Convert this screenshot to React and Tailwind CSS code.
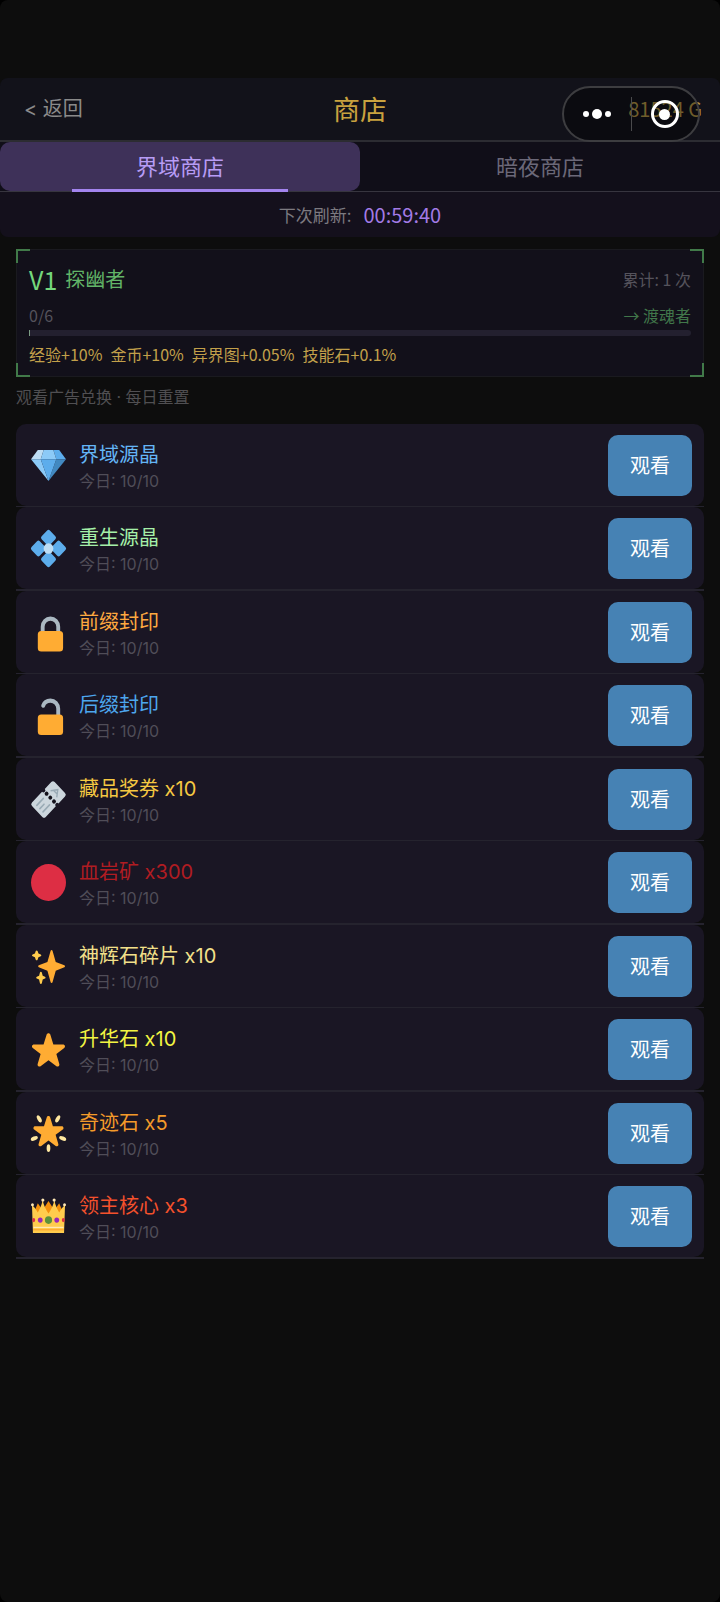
import React from 'react'

const ITEMS = [
  { name: '界域源晶', color: 'text-[#64b5f6]', icon: GemIcon },
  { name: '重生源晶', color: 'text-[#a5f0a8]', icon: FlowerIcon },
  { name: '前缀封印', color: 'text-[#ffa940]', icon: LockIcon },
  { name: '后缀封印', color: 'text-[#4da6ee]', icon: UnlockIcon },
  { name: '藏品奖券 x10', color: 'text-[#f5c842]', icon: TicketIcon },
  { name: '血岩矿 x300', color: 'text-[#b01c22]', icon: OreIcon },
  { name: '神辉石碎片 x10', color: 'text-[#f2e08a]', icon: SparklesIcon },
  { name: '升华石 x10', color: 'text-[#f2f542]', icon: StarIcon },
  { name: '奇迹石 x5', color: 'text-[#f39a2a]', icon: GlowStarIcon },
  { name: '领主核心 x3', color: 'text-[#f4512c]', icon: CrownIcon },
]

const BONUSES = ['经验+10%', '金币+10%', '异界图+0.05%', '技能石+0.1%']

const STAR_PATH =
  'M27.287 34.627c-.404 0-.806-.124-1.152-.371L18 28.422l-8.135 5.834c-.343.247-.743.371-1.147.371-.405 0-.81-.126-1.157-.378-.683-.493-.963-1.374-.711-2.177l3.034-9.792-8.062-5.681c-.685-.507-.967-1.387-.715-2.19.259-.804 1.007-1.351 1.853-1.354l9.947-.015 3.208-9.552c.268-.803 1.025-1.343 1.871-1.343.847 0 1.597.541 1.864 1.343l3.139 9.553 10.019.014c.847.003 1.595.551 1.853 1.354.252.804-.03 1.684-.715 2.19l-8.064 5.681 3.034 9.792c.252.803-.026 1.684-.71 2.177-.347.252-.752.378-1.158.378z'

function Icon({ children }) {
  return (
    <svg
      viewBox="0 0 36 36"
      preserveAspectRatio="none"
      className="w-[35px] h-[37px] shrink-0 overflow-visible"
      aria-hidden="true"
    >
      {children}
    </svg>
  )
}

function GemIcon() {
  return (
    <Icon>
      <path fill="#BDDDF4" d="M13 3H7l-7 9h10z" />
      <path fill="#5DADEC" d="M36 12l-7-9h-6l3 9z" />
      <path fill="#4289C1" d="M26 12h10L18 33z" />
      <path fill="#8CCAF7" d="M10 12H0l18 21zm3-9l-3 9h16l-3-9z" />
      <path fill="#5DADEC" d="M18 33l-8-21h16z" />
    </Icon>
  )
}

function FlowerIcon() {
  return (
    <Icon>
      <g fill="#5DADEC">
        <rect x="1.6" y="1.6" width="12" height="12" rx="2" transform="translate(10.4 0) rotate(45 7.6 7.6)" />
        <rect x="1.6" y="1.6" width="12" height="12" rx="2" transform="translate(10.4 20.8) rotate(45 7.6 7.6)" />
        <rect x="1.6" y="1.6" width="12" height="12" rx="2" transform="translate(0 10.4) rotate(45 7.6 7.6)" />
        <rect x="1.6" y="1.6" width="12" height="12" rx="2" transform="translate(20.8 10.4) rotate(45 7.6 7.6)" />
      </g>
      <circle cx="18" cy="18" r="5" fill="#BDDDF4" />
    </Icon>
  )
}

function LockIcon() {
  return (
    <Icon>
      <path d="M12 20v-7.5a8 8 0 0 1 16 0V20" fill="none" stroke="#AAB8C2" strokeWidth="4" />
      <rect x="7" y="16.5" width="26" height="20" rx="3.5" fill="#FFAC33" />
    </Icon>
  )
}

function UnlockIcon() {
  return (
    <Icon>
      <path
        d="M12.500 8.500C13.500 5.500 16.500 3.500 20 3.500a8 8 0 0 1 8 8V20"
        fill="none"
        stroke="#AAB8C2"
        strokeWidth="4"
        strokeLinecap="round"
      />
      <rect x="7" y="17" width="26" height="20" rx="3.5" fill="#FFAC33" />
    </Icon>
  )
}

function TicketIcon() {
  return (
    <Icon>
      <g transform="rotate(-45 18 18)">
        <path
          d="M4 8h14.6a2 2 0 0 0 4 0H32a2.500 2.500 0 0 1 2.500 2.500v15A2.500 2.500 0 0 1 32 28h-9.400a2 2 0 0 0-4 0H4a2.500 2.500 0 0 1-2.500-2.500v-15A2.500 2.500 0 0 1 4 8z"
          fill="#CCD6DD"
        />
        <path d="M5.500 13.500h9.500M5.500 18h6M5.500 22.500h9.500" stroke="#99AAB5" strokeWidth="1.6" strokeLinecap="round" />
        <path d="M25.500 22.500l6-4.500-6-4.500M28 15.500v5" fill="none" stroke="#99AAB5" strokeWidth="1.4" />
        <circle cx="20.600" cy="12.600" r="2" fill="#14121c" />
        <circle cx="20.600" cy="18" r="2" fill="#14121c" />
        <circle cx="20.600" cy="23.400" r="2" fill="#14121c" />
      </g>
    </Icon>
  )
}

function OreIcon() {
  return (
    <Icon>
      <circle cx="18" cy="18" r="18" fill="#DD2E44" />
    </Icon>
  )
}

function SparklesIcon() {
  return (
    <Icon>
      <path
        fill="#FFAC33"
        d="M34.347 16.893l-8.899-3.294-3.323-10.891c-.128-.42-.517-.708-.956-.708-.439 0-.828.288-.956.708l-3.322 10.891-8.9 3.294c-.393.146-.653.519-.653.938 0 .418.26.793.653.938l8.895 3.293 3.324 11.223c.126.424.516.715.959.715.442 0 .833-.291.959-.716l3.324-11.223 8.896-3.293c.391-.144.652-.518.652-.937 0-.418-.261-.792-.653-.938z"
      />
      <path
        fill="#FFCC4D"
        d="M14.347 27.894l-2.314-.856-.9-3.3c-.118-.436-.513-.738-.964-.738-.451 0-.846.302-.965.737l-.9 3.3-2.313.856c-.393.145-.653.52-.653.938 0 .418.26.793.653.938l2.301.853.907 3.622c.112.444.511.756.97.756.459 0 .858-.312.97-.757l.907-3.622 2.301-.853c.393-.144.653-.519.653-.937 0-.418-.26-.793-.653-.937zM10.009 6.231l-2.364-.875-.876-2.365c-.145-.393-.519-.653-.938-.653-.418 0-.792.26-.938.653l-.875 2.365-2.365.875c-.393.146-.653.52-.653.938 0 .418.26.793.653.938l2.365.875.875 2.365c.146.393.52.653.938.653.418 0 .792-.26.938-.653l.875-2.365 2.365-.875c.393-.146.653-.52.653-.938 0-.418-.26-.792-.653-.938z"
      />
    </Icon>
  )
}

function StarIcon() {
  return (
    <Icon>
      <path fill="#FFAC33" d={STAR_PATH} />
    </Icon>
  )
}

function GlowStarIcon() {
  return (
    <Icon>
      <g fill="#FFE8A0">
        <ellipse cx="8.5" cy="3.8" rx="1.9" ry="3.8" transform="rotate(-32 8.5 3.8)" />
        <ellipse cx="27.5" cy="3.8" rx="1.9" ry="3.8" transform="rotate(32 27.5 3.8)" />
        <ellipse cx="3.4" cy="22.8" rx="1.9" ry="3.8" transform="rotate(68 3.4 22.8)" />
        <ellipse cx="32.6" cy="22.8" rx="1.9" ry="3.8" transform="rotate(-68 32.6 22.8)" />
        <ellipse cx="18" cy="32.2" rx="1.9" ry="3.8" />
      </g>
      <path fill="#FFAC33" d={STAR_PATH} transform="translate(1.6 -1) scale(.91)" />
    </Icon>
  )
}

function CrownIcon() {
  return (
    <Icon>
      <path fill="#F4900C" d="M4 12l3-7 5 7 6-9 6 9 5-7 3 7v12H4z" />
      <path
        fill="#FFCC4D"
        d="M1 7c3 2 4 4 6 7 2-3 4-7 5-12 1 5 3 9 6 13 3-4 5-8 6-13 1 5 3 9 5 12 2-3 3-5 6-7l-1 27H2z"
      />
      <path fill="#FFE8B6" d="M2.500 28h31v1.200h-31z" />
      <path fill="#FFAC33" d="M2.200 30.200h31.600v1.400H2.200z" />
      <g fill="#FFE8B6">
        <circle cx="1.5" cy="6.5" r="1.5" />
        <circle cx="12.2" cy="2" r="1.6" />
        <circle cx="23.8" cy="2" r="1.6" />
        <circle cx="34.5" cy="6.5" r="1.5" />
      </g>
      <circle cx="18" cy="21.5" r="3.7" fill="#5C913B" />
      <circle cx="9.5" cy="21.5" r="2.5" fill="#9B26B6" />
      <circle cx="26.5" cy="21.5" r="2.5" fill="#9B26B6" />
      <ellipse cx="2.8" cy="21.5" rx="1.5" ry="2" fill="#DD2E44" />
      <ellipse cx="33.2" cy="21.5" rx="1.5" ry="2" fill="#DD2E44" />
    </Icon>
  )
}

function Capsule() {
  return (
    <div className="absolute right-5 top-2 flex h-14 w-[138px] items-center rounded-full border-2 border-[#3d3d40] bg-black/35">
      <button type="button" aria-label="更多" className="flex flex-1 items-center justify-center gap-[3px]">
        <span className="size-1.5 rounded-full bg-white" />
        <span className="size-2.5 rounded-full bg-white" />
        <span className="size-1.5 rounded-full bg-white" />
      </button>
      <span className="h-[34px] w-px bg-[#4a4a4c]" />
      <button type="button" aria-label="关闭" className="flex flex-1 items-center justify-center">
        <span className="flex size-7 items-center justify-center rounded-full border-3 border-white">
          <span className="size-[11px] rounded-full bg-white" />
        </span>
      </button>
    </div>
  )
}

function Header() {
  return (
    <header className="relative grid h-16 grid-cols-3 items-center rounded-t-lg border-b-2 border-[#2c2c32] bg-[#12121a] px-[18px]">
      <button
        type="button"
        className="justify-self-start px-1.5 font-['Inter','Noto_Sans_CJK_SC',sans-serif] text-xl text-[#8a8a8a]"
      >
        &lt; 返回
      </button>
      <h1 className="justify-self-center text-[27px] leading-8 text-[#c9a23f]">商店</h1>
      <span className="justify-self-end text-xl text-[#ab8f42]">81524 G</span>
      <Capsule />
    </header>
  )
}

function Tabs() {
  return (
    <nav className="grid h-[50px] grid-cols-2 border-b border-[#37353f] bg-[#100e18] text-[22px]">
      <button type="button" className="relative rounded-[10px] bg-[#3e3159] pb-0.5 text-[#b79cf5]">
        界域商店
        <span className="absolute inset-x-[20%] -bottom-px h-[3px] bg-[#a384ee]" />
      </button>
      <button type="button" className="pb-0.5 text-[#6b6878]">
        暗夜商店
      </button>
    </nav>
  )
}

function VipCard() {
  return (
    <section className="relative mx-4 mt-3 border border-[#1a1a1f] bg-[#12101a] px-3 pt-[11px] pb-2.5 text-base">
      <span className="absolute -top-px -left-px size-3.5 border-t-2 border-l-2 border-[#417a49]" />
      <span className="absolute -top-px -right-px size-3.5 border-t-2 border-r-2 border-[#417a49]" />
      <span className="absolute -bottom-px -left-px size-3.5 border-b-2 border-l-2 border-[#417a49]" />
      <span className="absolute -right-px -bottom-px size-3.5 border-r-2 border-b-2 border-[#417a49]" />
      <div className="flex items-center justify-between">
        <h2 className="flex items-center gap-2 text-xl text-[#62b568]">
          <span className="text-[25px] leading-9 text-[#74d67c]">V1</span>
          探幽者
        </h2>
        <span className="text-[#55535c]">累计: 1 次</span>
      </div>
      <div className="mt-1.5 mb-[3px] flex items-center justify-between text-[#55535c]">
        <span>0/6</span>
        <span className="text-[#41774a]">→ 渡魂者</span>
      </div>
      <div className="h-1.5 rounded-r-full bg-[#23202f]">
        <div className="h-full w-px bg-[#7c9c84]" />
      </div>
      <div className="mt-1.5 flex gap-2 text-[#c2a04a]">
        {BONUSES.map((bonus) => (
          <span key={bonus}>{bonus}</span>
        ))}
      </div>
    </section>
  )
}

function ShopRow({ item }) {
  const ItemIcon = item.icon
  return (
    <li className="border-[#25232e] odd:border-b even:border-b-2">
      <div className="flex h-[82px] items-center rounded-[10px] bg-[#1a1624] pr-3 pl-[15px]">
        <ItemIcon />
        <div className="ml-[13px] flex-1 pt-[3px] font-['Inter','Noto_Sans_CJK_SC',sans-serif]">
          <h3 className={`text-xl leading-7 ${item.color}`}>{item.name}</h3>
          <p className="text-base leading-6 text-[#504d58]">今日: 10/10</p>
        </div>
        <button type="button" className="h-[61px] w-[84px] rounded-[10px] bg-[#4682b4] text-xl text-white">
          观看
        </button>
      </div>
    </li>
  )
}

export default function App() {
  return (
    <div className="bg-black">
      <div className="min-h-screen rounded-lg bg-[#0d0d0d] pt-[78px] font-['Noto_Sans_CJK_SC',sans-serif]">
        <Header />
        <Tabs />
        <div className="flex h-[45px] items-center justify-center gap-3 rounded-b-lg bg-[#14101c]">
          <span className="text-[17px] text-[#7c7a80]">下次刷新:</span>
          <span className="text-xl text-[#a37be6]">00:59:40</span>
        </div>
        <VipCard />
        <p className="mx-4 mt-2 font-['Inter','Noto_Sans_CJK_SC',sans-serif] text-base text-[#504f52]">
          观看广告兑换 · 每日重置
        </p>
        <ul className="mx-4 mt-[15px]">
          {ITEMS.map((item) => (
            <ShopRow key={item.name} item={item} />
          ))}
        </ul>
      </div>
    </div>
  )
}
